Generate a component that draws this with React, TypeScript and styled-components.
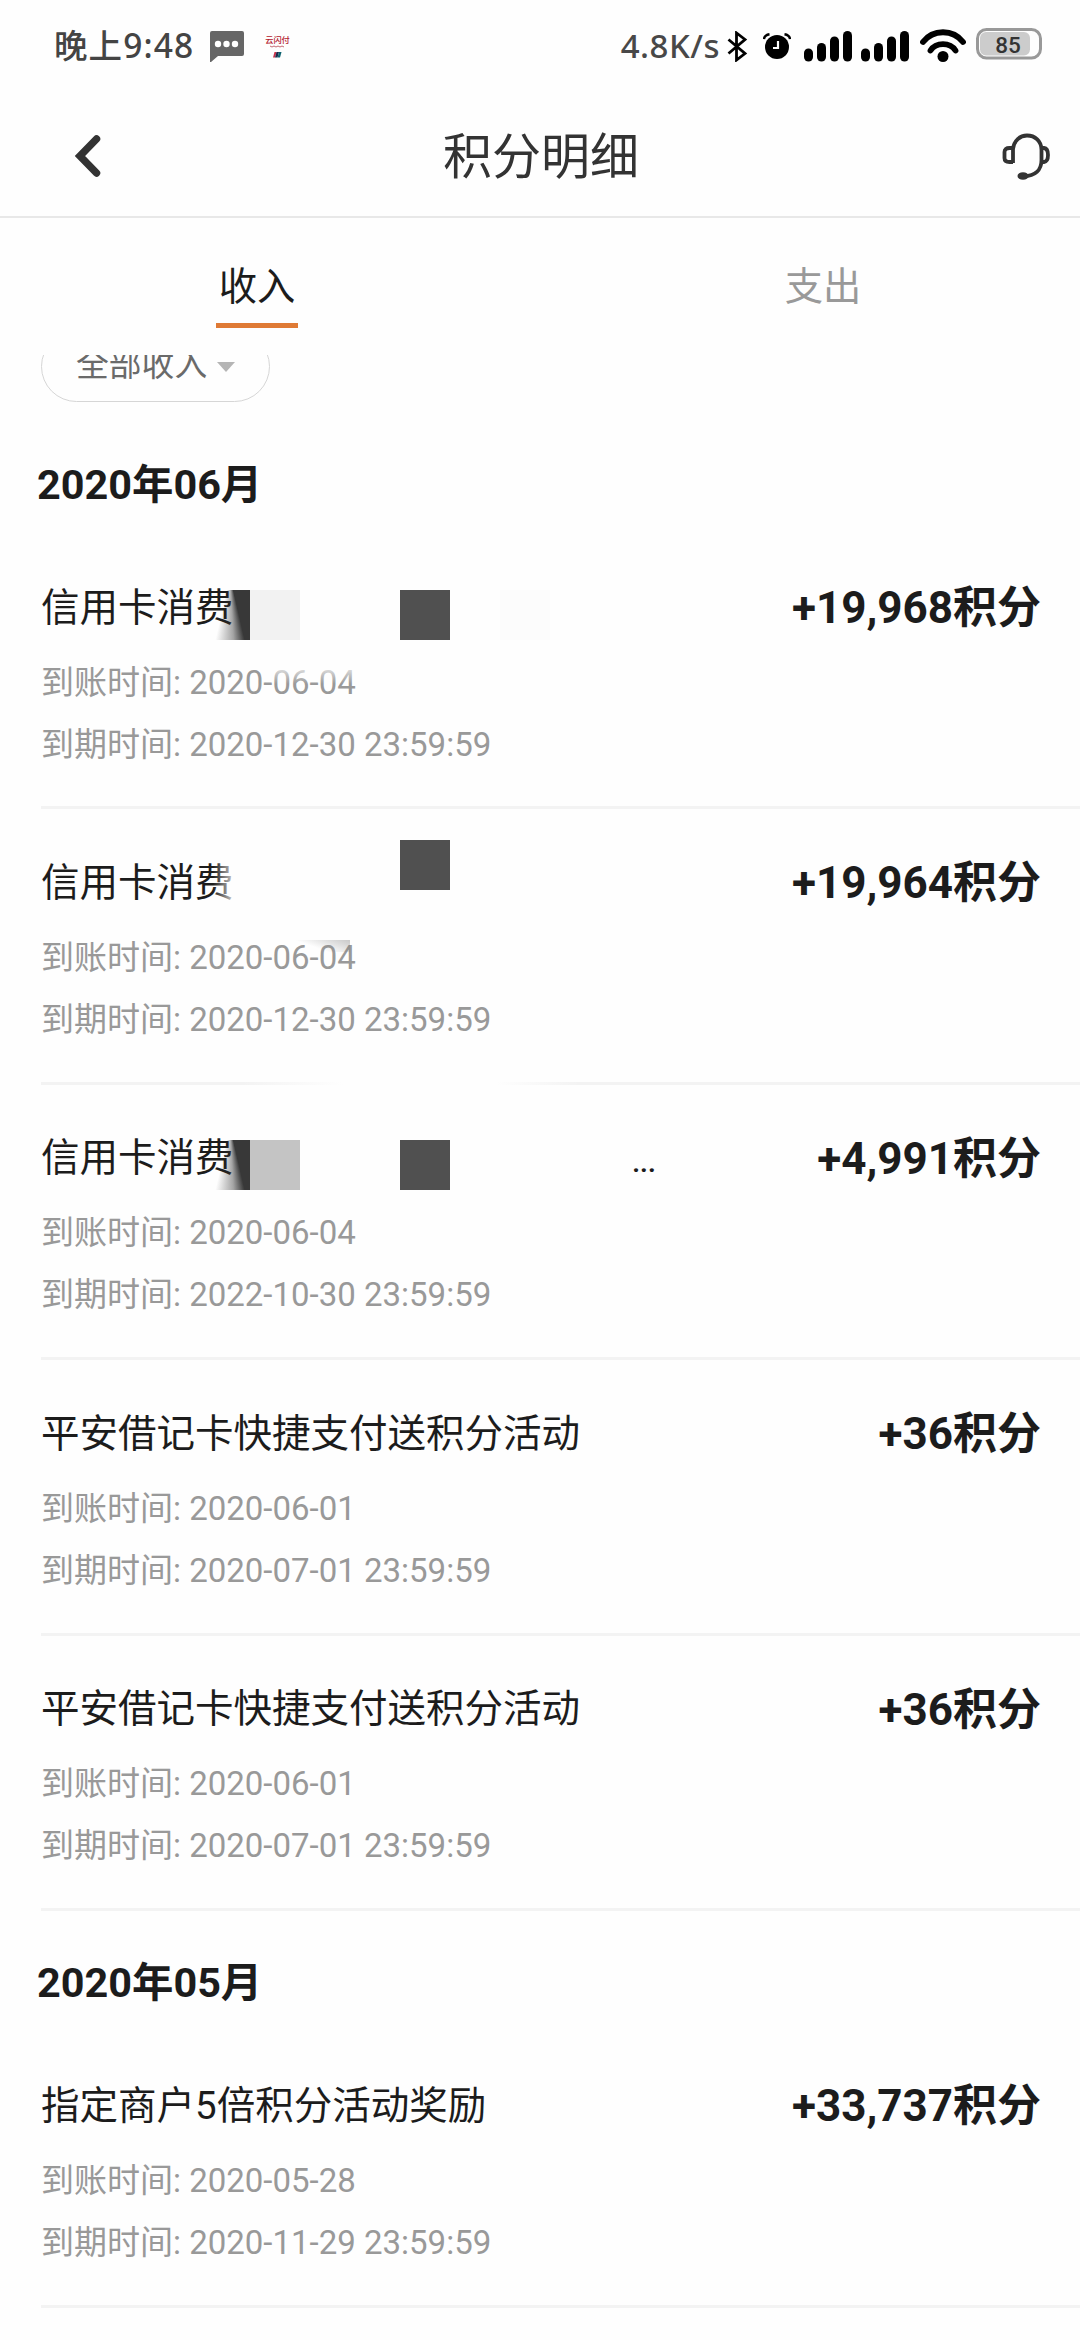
import React from 'react';
import styled, { createGlobalStyle } from 'styled-components';

const Global = createGlobalStyle`
  * { box-sizing: border-box; }
  html, body { margin: 0; background: #fefefe; }
`;

const Screen = styled.div`
  width: 1080px;
  height: 2340px;
  overflow: hidden;
  display: flex;
  flex-direction: column;
  background: #fefefe;
  color: #1c1c1c;
  font-family: Roboto, 'Noto Sans CJK SC', sans-serif;
`;

const StatusBar = styled.div`
  height: 92px;
  flex: none;
  display: flex;
  align-items: center;
  justify-content: space-between;
  padding: 0 38px 0 54px;
`;

const StatusGroup = styled.div`
  display: flex;
  align-items: center;
  svg { display: block; flex: none; }
`;

const Clock = styled.span`
  font: 500 33.5px/40px 'Noto Sans', 'Noto Sans CJK SC', sans-serif;
  letter-spacing: 1.1px;
  color: #444;
  margin: -2px 16px 0 0;
`;

const Speed = styled.span`
  font: 500 33px/40px 'Noto Sans', sans-serif;
  letter-spacing: 0.5px;
  color: #484848;
  margin-right: 7px;
`;

const PayBadge = styled.span`
  display: flex;
  flex-direction: column;
  align-items: center;
  margin-left: 21px;
  height: 25px;
`;

const PayName = styled.span`
  font: 500 8.2px/11px 'Noto Sans CJK SC', sans-serif;
  color: #b3202f;
`;

const Header = styled.header`
  height: 126px;
  flex: none;
  display: grid;
  grid-template-columns: 120px 1fr 162px;
  align-items: center;
  border-bottom: 2px solid #e8e8e8;
  padding: 4px 30px 0 74px;
  svg { display: block; }
`;

const Title = styled.h1`
  margin: 3px 0 0;
  font-size: 49px;
  line-height: 60px;
  font-weight: 400;
  text-align: center;
  color: #333;
`;

const HeaderAction = styled.div`
  justify-self: end;
`;

const Tabs = styled.nav`
  height: 137px;
  flex: none;
  display: flex;
  justify-content: space-between;
  padding: 39px 216px 27px;
`;

const Tab = styled.div<{ $active?: boolean }>`
  width: 82px;
  height: 71px;
  text-align: center;
  font-size: 38.3px;
  line-height: 59px;
  color: ${p => (p.$active ? '#1c1c1c' : '#999')};
  border-bottom: 5px solid ${p => (p.$active ? '#df7a35' : 'transparent')};
`;

const Content = styled.main`
  flex: 1;
  min-height: 0;
  overflow: hidden;
`;

const Filter = styled.div`
  width: 229px;
  height: 71px;
  margin: -24px 0 0 41px;
  border: 1.5px solid #d6d6d6;
  border-radius: 36px;
  display: flex;
  align-items: center;
  gap: 10px;
  padding-left: 34px;
  font-size: 32.8px;
  line-height: 40px;
  color: #6a6a6a;
`;

const FilterLabel = styled.span`
  padding-bottom: 4px;
`;

const Caret = styled.i`
  border: 9.5px solid transparent;
  border-top: 10px solid #b5b5b5;
  border-bottom: 0;
`;

const Month = styled.h2<{ $first?: boolean }>`
  margin: ${p => (p.$first ? '10.5px' : '0')} 0 0 37px;
  height: 121.5px;
  display: flex;
  align-items: center;
  font-size: 41.4px;
  line-height: 50px;
  font-weight: 700;
  padding-top: 23px;
`;

const Item = styled.article`
  position: relative;
  height: 275.4px;
  margin-left: 41px;
  padding: 38.5px 39px 0 0;
  border-bottom: 3px solid #f3f3f3;
`;

const ItemHead = styled.div`
  display: flex;
  justify-content: space-between;
  align-items: center;
  height: 70px;
  margin-bottom: 9px;
`;

const ItemTitle = styled.div`
  font-size: 38.5px;
  line-height: 50px;
`;

const Amount = styled.div`
  font-size: 44px;
  line-height: 50px;
  font-weight: 700;
  padding-top: 1px;
`;

const Detail = styled.div`
  font-size: 33px;
  line-height: 62px;
  height: 62px;
  color: #999;
`;

const Tile = styled.i<{ $x: number; $y: number; $tone: string }>`
  position: absolute;
  left: ${p => p.$x}px;
  top: ${p => p.$y}px;
  width: 50px;
  height: 50px;
  background: ${p => p.$tone};
`;

const Smear = styled.i<{ $y: number }>`
  position: absolute;
  left: 169px;
  top: ${p => p.$y}px;
  width: 40px;
  height: 50px;
  background: conic-gradient(at 20px -14px, #383838 0 167deg, rgba(56, 56, 56, 0.45) 177deg, rgba(56, 56, 56, 0) 193deg);
`;

const Dots = styled.span`
  position: absolute;
  left: 591px;
  top: 57px;
  font-size: 30px;
  line-height: 40px;
  font-weight: 500;
  letter-spacing: -0.5px;
`;

const Fade = styled.i<{ $x: number; $y: number; $w: number; $h: number; $bg: string }>`
  position: absolute;
  left: ${p => p.$x}px;
  top: ${p => p.$y}px;
  width: ${p => p.$w}px;
  height: ${p => p.$h}px;
  background: ${p => p.$bg};
`;

const SignalBars = () => (
  <svg width="49" height="31" viewBox="0 0 49 31" fill="#000">
    <rect x="0" y="17.5" width="9" height="13" rx="4.5" />
    <rect x="13" y="12" width="9" height="18.5" rx="4.5" />
    <rect x="26" y="5.5" width="9" height="25" rx="4.5" />
    <rect x="39" y="0" width="9" height="30.5" rx="4.5" />
  </svg>
);

type Row = { title: string; amount: string; got: string; due: string; extra?: React.ReactNode };

const june: Row[] = [
  {
    title: '信用卡消费', amount: '+19,968', got: '2020-06-04', due: '2020-12-30 23:59:59',
    extra: (
      <>
        <Smear $y={56} />
        <Tile $x={209} $y={56} $tone="#f2f2f2" />
        <Tile $x={359} $y={56} $tone="#505050" />
        <Tile $x={459} $y={56} $tone="#fcfcfc" />
        <Fade $x={225} $y={132} $w={90} $h={18} $bg="linear-gradient(rgba(254,254,254,.8), rgba(254,254,254,0))" />
      </>
    ),
  },
  {
    title: '信用卡消费', amount: '+19,964', got: '2020-06-04', due: '2020-12-30 23:59:59',
    extra: (
      <>
        <Fade $x={172} $y={50} $w={20} $h={46} $bg="linear-gradient(90deg, rgba(254,254,254,0), rgba(254,254,254,.75))" />
        <Tile $x={359} $y={31} $tone="#505050" />
        <Fade $x={250} $y={131} $w={59} $h={12} $bg="linear-gradient(200deg, rgba(120,120,120,.4), rgba(254,254,254,0) 60%)" />
        <Fade $x={200} $y={271} $w={340} $h={5} $bg="linear-gradient(90deg, rgba(254,254,254,0), #fefefe 30%, #fefefe 75%, rgba(254,254,254,0))" />
      </>
    ),
  },
  {
    title: '信用卡消费', amount: '+4,991', got: '2020-06-04', due: '2022-10-30 23:59:59',
    extra: (
      <>
        <Smear $y={55} />
        <Tile $x={209} $y={55} $tone="#c4c4c4" />
        <Tile $x={359} $y={55} $tone="#505050" />
        <Dots>...</Dots>
      </>
    ),
  },
  { title: '平安借记卡快捷支付送积分活动', amount: '+36', got: '2020-06-01', due: '2020-07-01 23:59:59' },
  { title: '平安借记卡快捷支付送积分活动', amount: '+36', got: '2020-06-01', due: '2020-07-01 23:59:59' },
];

const may: Row[] = [
  { title: '指定商户5倍积分活动奖励', amount: '+33,737', got: '2020-05-28', due: '2020-11-29 23:59:59' },
];

const Record = ({ row }: { row: Row }) => (
  <Item>
    <ItemHead>
      <ItemTitle>{row.title}</ItemTitle>
      <Amount>{row.amount}积分</Amount>
    </ItemHead>
    <Detail>到账时间: {row.got}</Detail>
    <Detail>到期时间: {row.due}</Detail>
    {row.extra}
  </Item>
);

const AlarmIcon = styled.svg`
  margin-left: 15px;
  margin-right: 13px;
`;

const WifiIcon = styled.svg`
  margin-left: 10px;
  margin-right: 10px;
`;

const BatteryIcon = styled.svg`
  margin-bottom: 4px;
`;

const Signals = styled.div`
  display: flex;
  gap: 8px;
`;

export default function App() {
  return (
    <Screen>
      <Global />
      <StatusBar>
        <StatusGroup>
          <Clock>晚上9:48</Clock>
          <svg width="34" height="31" viewBox="0 0 34 31">
            <path d="M2 0H32a2 2 0 0 1 2 2V23a2 2 0 0 1-2 2H8L1 31H0V2A2 2 0 0 1 2 0Z" fill="#666" />
            <circle cx="8" cy="13" r="3.2" fill="#fff" />
            <circle cx="16.5" cy="13" r="3.2" fill="#fff" />
            <circle cx="25" cy="13" r="3.2" fill="#fff" />
          </svg>
          <PayBadge>
            <PayName>云闪付</PayName>
            <svg width="16" height="14" viewBox="0 0 16 14">
              <path d="M1 1L3 2L5 1L7 2L9 1L11 2L13 1L15 2" stroke="#c46a72" strokeWidth="1" fill="none" />
              <path d="M5.5 7H7.5L6 12.500H4Z" fill="#c8324a" />
              <path d="M7.5 7H10L8.5 12.500H6Z" fill="#1c2a4c" />
              <path d="M10 7H12.5L11 12.500H8.5Z" fill="#0d6470" />
            </svg>
          </PayBadge>
        </StatusGroup>
        <StatusGroup>
          <Speed>4.8K/s</Speed>
          <svg width="21" height="31" viewBox="0 0 21 31" fill="none" stroke="#000" strokeWidth="2.8">
            <path d="M1.5 8.5L18 22.5L9.5 29V2L18 8.5L1.5 22.5" />
          </svg>
          <AlarmIcon width="28" height="27" viewBox="0 0 28 27">
            <circle cx="14" cy="14" r="12" fill="#000" />
            <path d="M1 6Q1.5 2 6.5 1.2M27 6Q26.5 2 21.5 1.2" stroke="#000" strokeWidth="2.4" fill="none" />
            <path d="M15 8V15H10" stroke="#fff" strokeWidth="2.2" fill="none" />
          </AlarmIcon>
          <Signals>
            <SignalBars />
            <SignalBars />
          </Signals>
          <WifiIcon width="46" height="36" viewBox="0 0 46 36" fill="none" stroke="#000" strokeWidth="5.8" strokeLinecap="round">
            <path d="M3 14C13 1 33 1 43 14" />
            <path d="M10.5 22.500C16 14 30 14 35.5 22.500" />
            <circle cx="23" cy="28.500" r="5.5" fill="#000" stroke="none" />
          </WifiIcon>
          <BatteryIcon width="66" height="32" viewBox="0 0 66 32">
            <rect x="1.5" y="1.5" width="63" height="28.5" rx="9" fill="none" stroke="#999" strokeWidth="3" />
            <rect x="4" y="4" width="50" height="23.5" rx="6" fill="#ccc" />
            <text x="32" y="24.5" textAnchor="middle" fontFamily="Roboto" fontWeight="500" fontSize="22.5" fill="#333">85</text>
          </BatteryIcon>
        </StatusGroup>
      </StatusBar>
      <Header>
        <svg width="28" height="44" viewBox="0 0 28 44" fill="none" stroke="#333" strokeWidth="7.5" strokeLinecap="round">
          <path d="M22.5 5L6 22L22.5 39" />
        </svg>
        <Title>积分明细</Title>
        <HeaderAction>
          <svg width="48" height="48" viewBox="0 0 48 48" fill="none" stroke="#333" strokeWidth="3.8">
            <path d="M11 31V17C12 8.5 18 3.5 25 3.5C33 3.5 39.500 9 39.500 18V28C39.500 38 33 44 22 44" />
            <path d="M11 16H7.5Q2.500 16 2.500 20V26Q2.500 30 7.5 30H11" />
            <path d="M39.500 16H42Q46 16.5 46 23T42 30H39" />
            <ellipse cx="21" cy="44" rx="5.5" ry="3.8" fill="#333" stroke="none" />
          </svg>
        </HeaderAction>
      </Header>
      <Tabs>
        <Tab $active>收入</Tab>
        <Tab>支出</Tab>
      </Tabs>
      <Content>
        <Filter><FilterLabel>全部收入</FilterLabel><Caret /></Filter>
        <Month $first>2020年06月</Month>
        {june.map((row, i) => <Record key={i} row={row} />)}
        <Month>2020年05月</Month>
        {may.map((row, i) => <Record key={i} row={row} />)}
      </Content>
    </Screen>
  );
}
